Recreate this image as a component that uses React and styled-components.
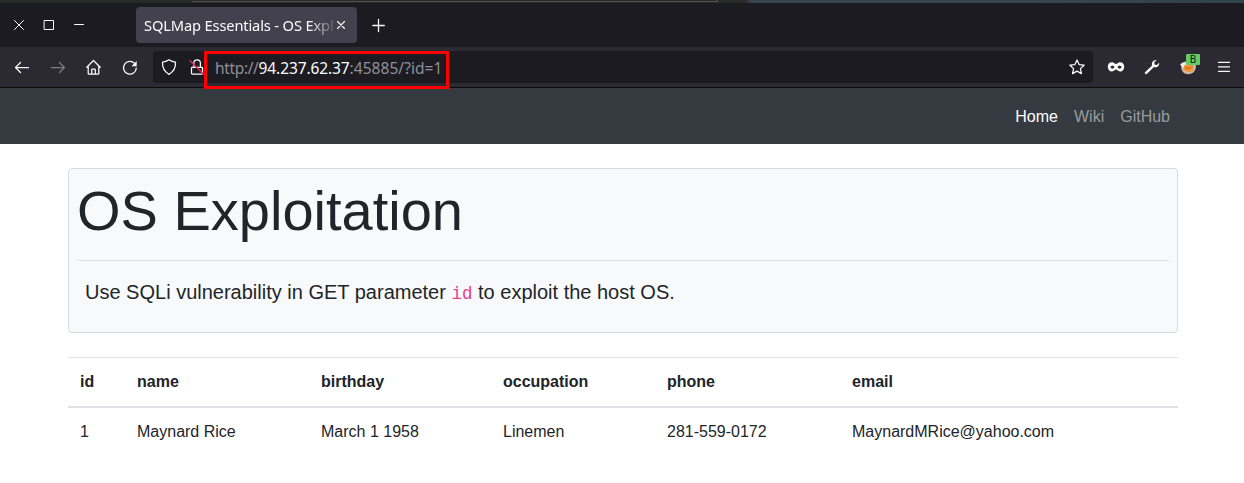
import React from "react";
import styled, { createGlobalStyle } from "styled-components";

const GlobalStyle = createGlobalStyle`
  *, *::before, *::after { box-sizing: border-box; }
  body {
    margin: 0;
    background: #fff;
    color: #212529;
    font: 16px/1.5 "Liberation Sans", Arial, sans-serif;
    overflow: hidden;
  }
`;

const Screen = styled.div`
  height: 483px;
  overflow: hidden;
`;

const DesktopEdge = styled.div`
  display: flex;
  height: 3px;
  background: linear-gradient(90deg, #272a28 0 744px, #384350 752px 1040px, #30444c 1240px);
`;

const WindowEdge = styled.div`
  width: 526px;
  height: 2px;
  margin-left: 192px;
  border: solid #525252;
  border-width: 0 1px 1px 0;
`;

const TabBar = styled.div`
  display: flex;
  align-items: center;
  height: 44px;
  background: #1c1b22;
  color: #fbfbfe;
  font-family: "Noto Sans", sans-serif;
`;

const WindowControls = styled.div`
  display: flex;
  gap: 14px;
  width: 136px;
  padding-left: 11px;
`;

const Tab = styled.div`
  display: flex;
  align-items: center;
  width: 221px;
  height: 36px;
  padding: 0 4px 0 8px;
  border-radius: 4px;
  background: #42414d;
`;

const TabTitle = styled.span`
  flex: none;
  width: 192px;
  overflow: hidden;
  white-space: nowrap;
  font-size: 14.7px;
  letter-spacing: -0.16px;
  line-height: 22px;
  mask-image: linear-gradient(90deg, #000 164px, transparent 194px);
`;

const NewTab = styled.div`
  display: flex;
  margin-left: 13px;
`;

const Toolbar = styled.div`
  display: flex;
  align-items: center;
  height: 41px;
  padding-left: 14px;
  border-bottom: 1px solid #0c0c0d;
  background: #2b2a33;
  color: #fbfbfe;
`;

const NavButtons = styled.div`
  display: flex;
  gap: 20px;
  width: 139px;
`;

const AddressBar = styled.div`
  position: relative;
  display: flex;
  align-items: center;
  width: 940px;
  height: 32px;
  padding: 0 8px;
  border-radius: 4px;
  background: #1c1b22;
`;

const SiteInfo = styled.div`
  display: flex;
  gap: 12px;
  width: 54px;
`;

const Url = styled.span`
  flex: 1;
  padding-top: 2px;
  color: #8f8f98;
  font: 15.5px/24px "Noto Sans", sans-serif;
  letter-spacing: 0.04px;
  white-space: nowrap;
`;

const Scheme = styled.span`
  letter-spacing: -0.35px;
`;

const Host = styled.span`
  color: #fbfbfe;
  letter-spacing: -0.1px;
`;

const Highlight = styled.div`
  position: absolute;
  left: 51px;
  top: 0;
  width: 245px;
  height: 38px;
  border: 3px solid #f00;
`;

const Extensions = styled.div`
  display: flex;
  gap: 20px;
  padding-left: 15px;
`;

const Extension = styled.div`
  position: relative;
  width: 16px;
  height: 16px;
`;

const Badge = styled.span`
  position: absolute;
  left: 6px;
  top: -5px;
  width: 14px;
  height: 11px;
  border-radius: 1px;
  background: #62cc62;
  color: #111;
  font: 10px/11px "Noto Sans", sans-serif;
  text-align: center;
`;

const Icon = styled.svg`
  display: block;
  flex: none;
  width: 16px;
  height: 16px;
  overflow: visible;
  fill: none;
  stroke: currentColor;
  stroke-width: ${(p) => p.$weight || 1.25};
  stroke-linecap: round;
  stroke-linejoin: round;
  opacity: ${(p) => (p.$muted ? 0.4 : 1)};
`;

const SiteNav = styled.nav`
  display: flex;
  justify-content: flex-end;
  align-items: center;
  gap: 16px;
  height: 56px;
  padding: 2px 74px 0 0;
  background: #343a40;
`;

const NavLink = styled.a`
  color: ${(p) => (p.$active ? "#fff" : "#999c9f")};
`;

const Container = styled.main`
  width: 1110px;
  margin: 24px 0 0 68px;
`;

const Card = styled.section`
  height: 165px;
  padding: 8px;
  border: 1px solid #d8d9db;
  border-radius: 4px;
  background: #f8f9fa;
`;

const Title = styled.h1`
  margin: 0;
  padding-bottom: 16px;
  border-bottom: 1px solid #dfe0e1;
  font-size: 56px;
  font-weight: 400;
  line-height: 67px;
`;

const Lead = styled.p`
  margin: 16px 0 0;
  padding: 0 8px;
  font-size: 20px;
  line-height: 30px;
`;

const Code = styled.code`
  color: #e83e8c;
  font: 17.5px "Liberation Mono", monospace;
`;

const Table = styled.table`
  width: 1110px;
  margin-top: 24px;
  border-spacing: 0;
  table-layout: fixed;
`;

const HeadCell = styled.th`
  width: ${(p) => p.$width}px;
  padding: 12px;
  border-top: 1px solid #dee2e6;
  border-bottom: 2px solid #dee2e6;
  text-align: left;
  line-height: 24px;
`;

const Cell = styled.td`
  padding: 12px;
  line-height: 24px;
`;

const columns = [
  ["id", 57, "1"],
  ["name", 184, "Maynard Rice"],
  ["birthday", 182, "March 1 1958"],
  ["occupation", 164, "Linemen"],
  ["phone", 185, "281-559-0172"],
  ["email", 338, "MaynardMRice@yahoo.com"],
];

function BrowserTabs() {
  return (
    <TabBar>
      <WindowControls>
        <Icon $weight={1}><path d="M3.5 3.5l9 9M12.5 3.5l-9 9" /></Icon>
        <Icon $weight={1}><path d="M3.5 3.5h9v9h-9z" /></Icon>
        <Icon $weight={1}><path d="M3.5 7.5h9" /></Icon>
      </WindowControls>
      <Tab>
        <TabTitle>SQLMap Essentials - OS Expl</TabTitle>
        <Icon $weight={1.1}><path d="M1.5 4.5l7 7M8.5 4.5l-7 7" /></Icon>
      </Tab>
      <NewTab>
        <Icon $weight={1.3}><path d="M8.5 2.5v12M2.8 8.5h11.5" /></Icon>
      </NewTab>
    </TabBar>
  );
}

function BrowserToolbar() {
  return (
    <Toolbar>
      <NavButtons>
        <Icon><path d="M14.5 8.5h-13M6.5 3.5l-5 5 5 5" /></Icon>
        <Icon $muted><path d="M1.5 8.5h13M9.5 3.5l5 5-5 5" /></Icon>
        <Icon><path d="M.8 8.3L7.5 1.5l6.7 6.8M2.2 7.3v7.1q0 .6.6.6h9.4q.6 0 .6-.6V7.3M5.7 15v-4.2q0-.8.8-.8h2q.8 0 .8.8V15" /></Icon>
        <Icon>
          <path d="M12.6 4.4A6.4 6.4 0 1 0 14.3 9" />
          <path d="M14.7 2v5.2H9.5z" fill="currentColor" stroke="none" />
        </Icon>
      </NavButtons>
      <AddressBar>
        <SiteInfo>
          <Icon><path d="M8 .8Q11 3 14.5 3.2 15 11 8 15.4 1 11 1.5 3.2 5 3 8 .8z" /></Icon>
          <Icon>
            <path d="M3.3 8.4h9.4q.8 0 .8.8v5q0 .8-.8.8H3.3q-.8 0-.8-.8v-5q0-.8.8-.8zM4.8 8V4.2a3.3 3.3 0 0 1 6.6 0V8" />
            <path d="M1 1.7l13.5 13.5" stroke="#e22850" />
          </Icon>
        </SiteInfo>
        <Url><Scheme>http://</Scheme><Host>94.237.62.37</Host>:45885/?id=1</Url>
        <Icon><path d="M8 1l2.1 4.6 5 .6-3.7 3.4 1 5L8 12.1l-4.4 2.5 1-5L.9 6.2l5-.6z" /></Icon>
        <Highlight />
      </AddressBar>
      <Extensions>
        <Icon>
          <path fill="currentColor" stroke="none" fillRule="evenodd" d="M4 3.2c1.9 0 2.8 1.8 4 1.8s2.1-1.8 4-1.8c2.7 0 4.2 2 4.2 4.5s-1.5 4.8-4.2 4.8C10.1 12.5 9.2 10.6 8 10.6s-2.1 1.9-4 1.9c-2.7 0-4.2-2.3-4.2-4.8S1.3 3.2 4 3.2zM2.2 8q2.3 3.6 4.4 0-2.1-3.2-4.4 0zm7.2 0q2.1 3.6 4.4 0-2.3-3.2-4.4 0z" />
        </Icon>
        <Icon>
          <path fill="currentColor" stroke="none" d="M12.8 1L10.3 3.3l.3 2.3 2.3.3L15.2 3.7c.4 3.2-2.4 5.5-5.2 4.2L3 14.7c-1.2 1.2-3-.3-1.8-1.7l6.9-6.5C7 3.5 9.7.4 12.8 1z" />
        </Icon>
        <Extension>
          <Icon>
            <path d="M1 6q0 9 7 9.3Q16 15 16 6L12 2 5 2.5 1 5z" fill="#c7c5c4" stroke="none" />
            <path d="M0 5.5l3-2.3 3 1-2 5z" fill="#f1ebe6" stroke="none" />
            <path d="M4.5 6l9.8.2-1.6 6L8 13l-5-2z" fill="#f49232" stroke="none" />
            <path d="M5.5 8.5l2.5 1.2 3-1.2" stroke="#a65d24" strokeWidth=".8" />
            <path d="M2.3 11.5Q4.5 14.8 8 14.8t6-3.5" stroke="#d9a27a" strokeWidth=".9" />
          </Icon>
          <Badge>B</Badge>
        </Extension>
        <Icon $weight={1.3}><path d="M2.5 3.3h11M2.5 7.8h11M2.5 12.3h11" /></Icon>
      </Extensions>
    </Toolbar>
  );
}

export default function App() {
  return (
    <Screen>
      <GlobalStyle />
      <DesktopEdge><WindowEdge /></DesktopEdge>
      <BrowserTabs />
      <BrowserToolbar />
      <SiteNav>
        <NavLink $active>Home</NavLink>
        <NavLink>Wiki</NavLink>
        <NavLink>GitHub</NavLink>
      </SiteNav>
      <Container>
        <Card>
          <Title>OS Exploitation</Title>
          <Lead>Use SQLi vulnerability in GET parameter <Code>id</Code> to exploit the host OS.</Lead>
        </Card>
        <Table>
          <thead>
            <tr>{columns.map(([name, width]) => <HeadCell key={name} $width={width}>{name}</HeadCell>)}</tr>
          </thead>
          <tbody>
            <tr>{columns.map(([name, , value]) => <Cell key={name}>{value}</Cell>)}</tr>
          </tbody>
        </Table>
      </Container>
    </Screen>
  );
}
